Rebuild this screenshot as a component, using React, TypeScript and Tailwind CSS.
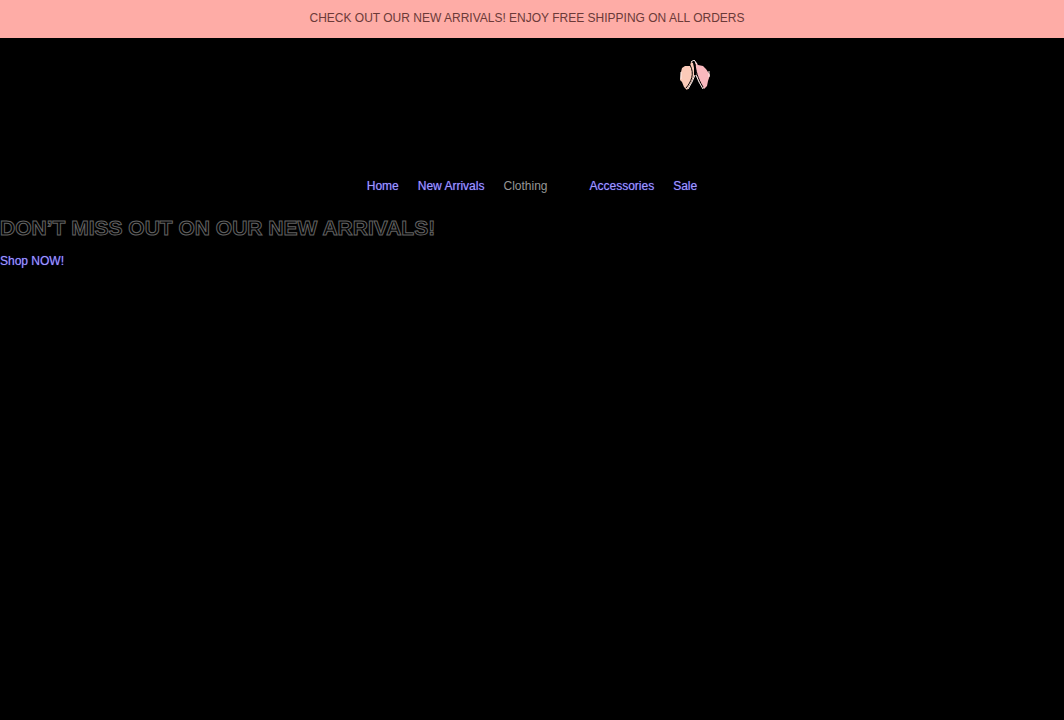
import React from "react";

type NavItem = {
    label: string;
    menu?: boolean;
};

const NAV_ITEMS: NavItem[] = [
    { label: "Home" },
    { label: "New Arrivals" },
    { label: "Clothing", menu: true },
    { label: "Accessories" },
    { label: "Sale" },
];

const LINK = "text-[#a09afa] [text-shadow:0_0_1px_#3a32e6]";

function Banner() {
    return (
        <div className="flex h-[38px] items-center justify-center bg-[#feaca6] pr-2.5 pb-0.5">
            <p className="text-center text-[12px] leading-4 text-[#6b3a38]">
                CHECK OUT OUR NEW ARRIVALS! ENJOY FREE SHIPPING ON ALL ORDERS
            </p>
        </div>
    );
}

/* two folded petals: peach on the left, pink on the right */
function Logo() {
    return (
        <svg viewBox="0 0 30 32" className="h-8 w-[30px]" aria-hidden>
            <path d="M1 12 2 8 5 6 10 6 11 2 13 3 14 8 14 16 11 23 7 30 4 27 2 22 0 20Z" fill="#fbcab8" />
            <path d="M15 1 18 5 23 6 26 9 28 12 30 15 28 21 27 26 24 29 20 23 17 17 16 10Z" fill="#f9b8be" />
            <path d="M10 5C15 14 11 22 6 28" fill="none" stroke="#000" strokeWidth="1" />
            <path d="M15 4C16 11 17 17 23 27" fill="none" stroke="#000" strokeWidth="1" />
            <path d="M11 2 14 0 17 4M15 15 12 22 8 29M16 15 19 22 23 29M1 12v7M29 11v6" fill="none" stroke="#fff0ec" strokeWidth="1" />
        </svg>
    );
}

function Header() {
    return (
        <header>
            <div className="flex justify-center pt-[22px] pb-[84px] pl-[326px]">
                <a href="#" aria-label="Store home">
                    <Logo />
                </a>
            </div>
            <nav aria-label="Main">
                <ul className="flex justify-center gap-[19px] text-[12px] leading-5">
                    {NAV_ITEMS.map((item) => (
                        <li key={item.label}>
                            {item.menu ? (
                                <button type="button" className="pr-[23px] text-[#969696]">
                                    {item.label}
                                </button>
                            ) : (
                                <a href="#" className={LINK}>
                                    {item.label}
                                </a>
                            )}
                        </li>
                    ))}
                </ul>
            </nav>
        </header>
    );
}

export default function App() {
    return (
        <div className="min-h-screen bg-black font-['Liberation_Sans',Arial,sans-serif]">
            <Banner />
            <Header />
            <main className="pt-5">
                <h1 className="text-[21px] leading-6 font-bold text-black [-webkit-text-stroke:1px_#626262]">
                    DON’T MISS OUT ON OUR NEW ARRIVALS!
                </h1>
                <a href="#" className={`mt-[11px] inline-block text-[12px] leading-5 ${LINK}`}>
                    Shop NOW!
                </a>
            </main>
        </div>
    );
}
